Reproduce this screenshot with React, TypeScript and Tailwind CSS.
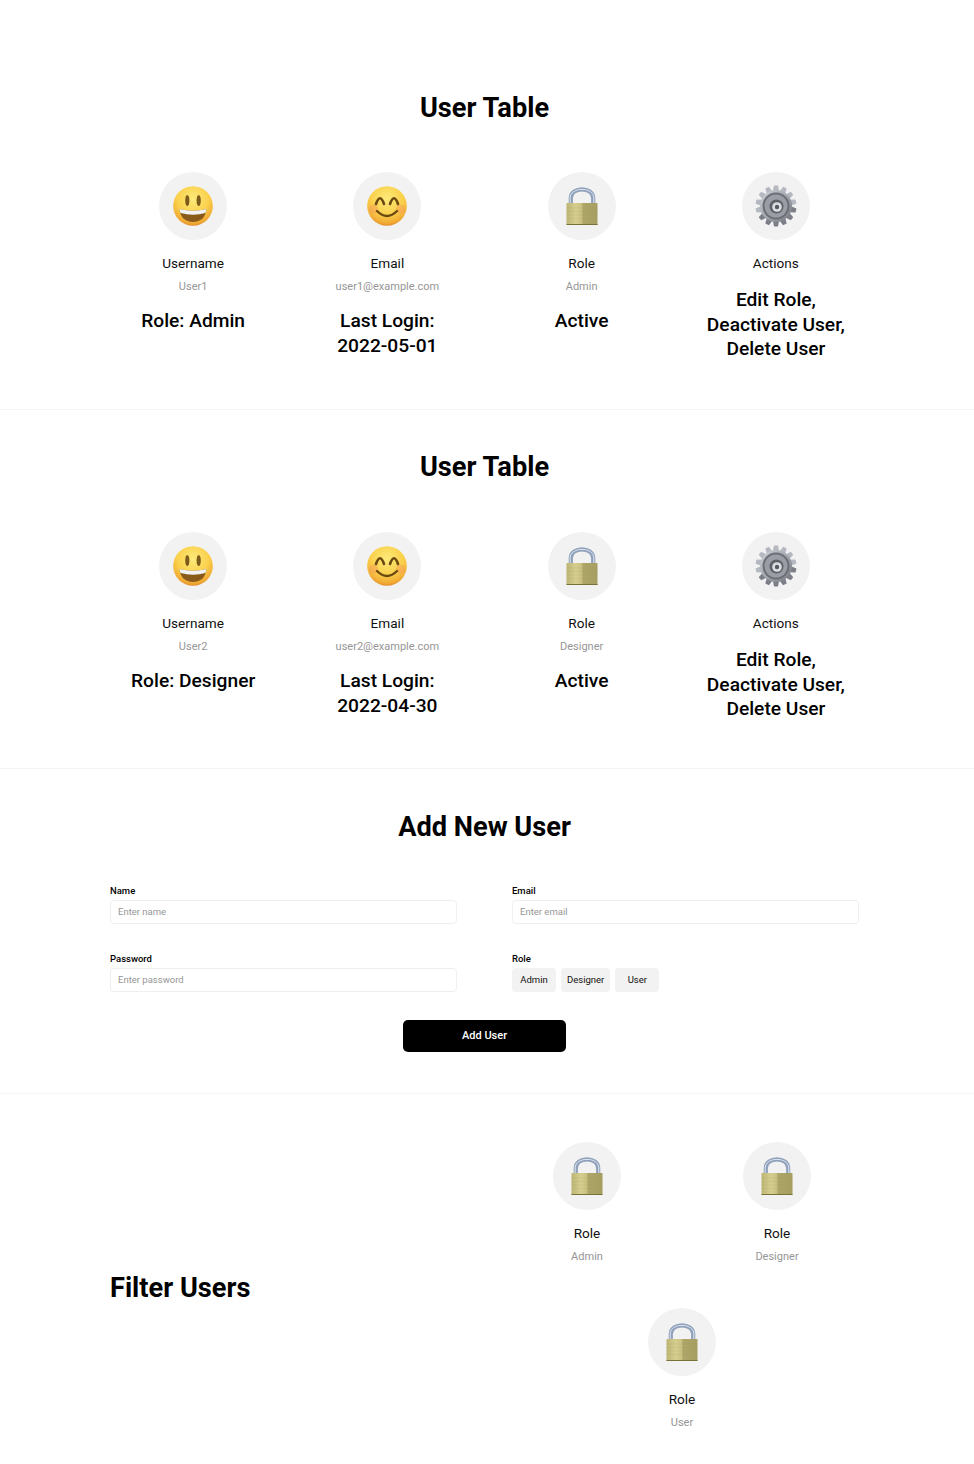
import { useId } from "react";

const font = "font-['Roboto',sans-serif]";

function FaceGradient({ id }: { id: string }) {
  return (
    <radialGradient id={id} cx="50%" cy="32%" r="70%">
      <stop offset="0%" stopColor="#fdea7c" />
      <stop offset="58%" stopColor="#fad04a" />
      <stop offset="88%" stopColor="#f0a934" />
      <stop offset="100%" stopColor="#dd8526" />
    </radialGradient>
  );
}

function Smile() {
  const id = useId();
  return (
    <svg width="42" height="42" viewBox="0 0 42 42">
      <defs>
        <FaceGradient id={id} />
      </defs>
      <circle cx="21" cy="21" r="19.8" fill={`url(#${id})`} />
      <ellipse cx="15.3" cy="15.5" rx="2.1" ry="5.6" fill="#7b5a1c" />
      <ellipse cx="26.7" cy="15.5" rx="2.1" ry="5.6" fill="#7b5a1c" />
      <path d="M7.5 24 Q21 27.5 34.5 24 Q33 36.8 21 37 Q9 36.8 7.5 24Z" fill="#8a5a1a" />
      <path d="M7.5 24 Q21 27.5 34.5 24 Q34.2 26.5 33.4 28 Q21 31.5 8.6 28 Q7.8 26.5 7.5 24Z" fill="#f2f2f2" />
    </svg>
  );
}

function Blush() {
  const id = useId();
  return (
    <svg width="42" height="42" viewBox="0 0 42 42">
      <defs>
        <FaceGradient id={id} />
      </defs>
      <circle cx="21" cy="21" r="19.8" fill={`url(#${id})`} />
      <circle cx="7.5" cy="24" r="4.5" fill="#f59a5a" opacity="0.45" />
      <circle cx="34.5" cy="24" r="4.5" fill="#f59a5a" opacity="0.45" />
      <path d="M10 19 Q14 7.5 18 19" fill="none" stroke="#6b4a12" strokeWidth="2.6" strokeLinecap="round" />
      <path d="M24 19 Q28 7.5 32 19" fill="none" stroke="#6b4a12" strokeWidth="2.6" strokeLinecap="round" />
      <path d="M11 26 Q21 36 31 26" fill="none" stroke="#6b4a12" strokeWidth="2.4" strokeLinecap="round" />
    </svg>
  );
}

function Lock() {
  const id = useId();
  return (
    <svg width="42" height="42" viewBox="0 0 42 42">
      <defs>
        <linearGradient id={id} x1="0" x2="1" y1="0" y2="0">
          <stop offset="0%" stopColor="#bdb573" />
          <stop offset="30%" stopColor="#d6ce8f" />
          <stop offset="49%" stopColor="#c9c080" />
          <stop offset="53%" stopColor="#aea669" />
          <stop offset="100%" stopColor="#a69e61" />
        </linearGradient>
      </defs>
      <path d="M9.8 19 V13 C9.8 1.5 32.2 1.5 32.2 13 V19" fill="none" stroke="#8fa0bb" strokeWidth="4.2" />
      <path d="M9.2 19 V13 C9.2 1.5 32.8 1.5 32.8 13 V19" fill="none" stroke="#dfe6f0" strokeWidth="1" />
      <rect x="5.5" y="18" width="31" height="22" rx="0.6" fill={`url(#${id})`} />
      <path d="M5.5 23H36.5M5.5 26.5H36.5M5.5 30H36.5M5.5 33.5H36.5" stroke="#9f975a" strokeWidth="0.5" opacity="0.3" />
      <rect x="5.5" y="39" width="31" height="1" fill="#7a7138" />
    </svg>
  );
}

function Gear() {
  const id = useId();
  const teeth = Array.from({ length: 14 }, (_, i) => (i * 360) / 14);
  return (
    <svg width="44" height="44" viewBox="0 0 44 44">
      <defs>
        <linearGradient id={id} x1="0" x2="1" y1="0" y2="1">
          <stop offset="0%" stopColor="#d0d3d9" />
          <stop offset="100%" stopColor="#767982" />
        </linearGradient>
      </defs>
      {teeth.map((a) => (
        <path
          key={a}
          d="M18.8 8 L20 1.5 H24 L25.2 8Z"
          fill={a > 90 && a < 250 ? "#7b7e87" : "#b4b8c0"}
          transform={`rotate(${a} 22 22)`}
        />
      ))}
      <circle cx="22" cy="22" r="16" fill={`url(#${id})`} />
      <circle cx="22" cy="22" r="13.5" fill="#6c6e76" />
      <circle cx="22" cy="22" r="11.5" fill="#9a9da5" />
      <circle cx="22.5" cy="22.5" r="7" fill="#5f6169" />
      <circle cx="23" cy="23" r="4.8" fill="#dcdee2" />
      <circle cx="23" cy="23" r="2.2" fill="#555962" />
    </svg>
  );
}

function Item({ icon, label, sub }: { icon: React.ReactNode; label: string; sub?: string }) {
  return (
    <div className="flex flex-col items-center">
      <div className="flex h-[68px] w-[68px] items-center justify-center rounded-full bg-[#f2f2f2]">{icon}</div>
      <div className="mt-[13px] h-[20px] text-[13.6px] leading-[20px] text-[#111]">{label}</div>
      {sub && <div className="mt-[4px] h-[20px] text-[11px] leading-[20px] text-[#969696]">{sub}</div>}
    </div>
  );
}

function Column({ icon, label, sub, text }: { icon: React.ReactNode; label: string; sub?: string; text: string[] }) {
  return (
    <div className="flex flex-col items-center text-center">
      <Item icon={icon} label={label} sub={sub} />
      <div className={`${sub ? "mt-[12px]" : "mt-[15px]"} text-[19.2px] font-medium leading-[24.5px] text-black`}>
        {text.map((t) => (
          <div key={t}>{t}</div>
        ))}
      </div>
    </div>
  );
}

function UserTable({ user, email, role, login, first }: { user: string; email: string; role: string; login: string; first?: boolean }) {
  return (
    <section className={`border-b border-[#f3f3f3] pl-[110px] pr-[115px] ${first ? "mt-[50px] h-[360px] pt-[41px]" : "h-[359px] pt-[40px]"}`}>
      <h2 className="text-center text-[27.2px] font-bold leading-[34px] text-black">User Table</h2>
      <div className={`${first ? "mt-[47px]" : "mt-[48px]"} grid grid-cols-4 gap-x-[28px]`}>
        <Column icon={<Smile />} label="Username" sub={user} text={[`Role: ${role}`]} />
        <Column icon={<Blush />} label="Email" sub={email} text={["Last Login:", login]} />
        <Column icon={<Lock />} label="Role" sub={role} text={["Active"]} />
        <Column icon={<Gear />} label="Actions" text={["Edit Role,", "Deactivate User,", "Delete User"]} />
      </div>
    </section>
  );
}

function Field({ label, placeholder }: { label: string; placeholder: string }) {
  return (
    <div>
      <div className="h-[14px] text-[9.5px] font-medium leading-[15px] text-black">{label}</div>
      <input
        readOnly
        placeholder={placeholder}
        className="mt-[3px] block h-[24px] w-full rounded-[4px] border border-[#efefef] bg-white px-[7px] pb-[1px] text-[9.5px] text-black outline-none placeholder:text-[#969696]"
      />
    </div>
  );
}

export default function App() {
  return (
    <div className={`${font} h-[1464px] w-[974px] overflow-hidden bg-white`}>
      <UserTable first user="User1" email="user1@example.com" role="Admin" login="2022-05-01" />
      <UserTable user="User2" email="user2@example.com" role="Designer" login="2022-04-30" />

      <section className="h-[325px] border-b border-[#f7f7f7] pl-[110px] pr-[115px] pt-[41px]">
        <h2 className="text-center text-[27.2px] font-bold leading-[34px] text-black">Add New User</h2>
        <div className="mt-[39px] grid grid-cols-2 gap-x-[55px] gap-y-[27px]">
          <Field label="Name" placeholder="Enter name" />
          <Field label="Email" placeholder="Enter email" />
          <Field label="Password" placeholder="Enter password" />
          <div>
            <div className="h-[14px] text-[9.5px] font-medium leading-[15px] text-black">Role</div>
            <div className="mt-[3px] flex gap-[5px]">
              {["Admin", "Designer", "User"].map((r) => (
                <button key={r} className="h-[24px] min-w-[44px] rounded-[4px] bg-[#f2f2f2] px-[6px] text-[9.5px] text-[#111]">
                  {r}
                </button>
              ))}
            </div>
          </div>
        </div>
        <div className="mt-[28px] flex justify-center">
          <button className="h-[32px] w-[163px] rounded-[5px] bg-black text-[11px] font-medium text-white">Add User</button>
        </div>
      </section>

      <section className="flex h-[371px] items-center pb-[32px] pl-[110px] pr-[115px] pt-[48px]">
        <h2 className="w-[395px] shrink-0 text-[27.2px] font-bold leading-[34px] text-black">Filter Users</h2>
        <div className="flex flex-wrap justify-center gap-x-[122px] gap-y-[41px]">
          <Item icon={<Lock />} label="Role" sub="Admin" />
          <Item icon={<Lock />} label="Role" sub="Designer" />
          <Item icon={<Lock />} label="Role" sub="User" />
        </div>
      </section>
    </div>
  );
}
